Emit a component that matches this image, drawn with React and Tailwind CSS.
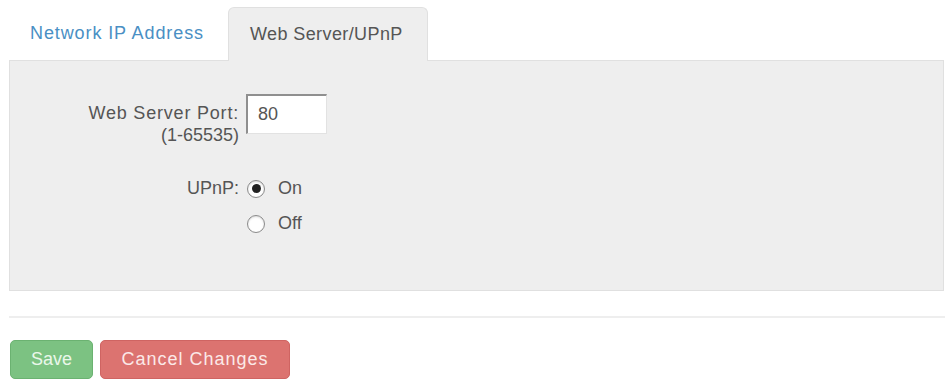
import React, { useState } from "react";

function Radio({ checked, label, onClick }) {
  return (
    <label className="flex items-center h-[35px] cursor-pointer" onClick={onClick}>
      <span className="w-[18px] h-[18px] rounded-full border border-[#8a8a8a] bg-white flex items-center justify-center shadow-[inset_0_1px_2px_rgba(0,0,0,0.15)]">
        {checked && <span className="w-[9px] h-[9px] rounded-full bg-[#222]" />}
      </span>
      <span className="ml-[13px] text-[#555]">{label}</span>
    </label>
  );
}

export default function App() {
  const [upnp, setUpnp] = useState("on");
  const [port, setPort] = useState("80");

  return (
    <div
      className="w-[945px] h-[381px] bg-white pl-[9px] pt-[7px] text-[18px] text-[#555]"
      style={{ fontFamily: '"Liberation Sans", Arial, sans-serif' }}
    >
      {/* Tabs */}
      <div className="flex h-[53px] items-stretch">
        <a className="flex items-center w-[219px] pl-[21px] text-[#4a8fc4] tracking-[0.9px] whitespace-nowrap">
          Network IP Address
        </a>
        <div className="flex items-center pl-[21px] w-[200px] bg-[#eeeeee] border border-b-0 border-[#e0e0e0] rounded-t-[6px] -mb-px relative z-10 tracking-[0.4px] whitespace-nowrap">
          Web Server/UPnP
        </div>
      </div>

      {/* Panel */}
      <div className="h-[231px] mr-[1px] bg-[#eeeeee] border border-[#e0e0e0] pt-[33px]">
        <div className="grid grid-cols-[229px_1fr] gap-x-[7px]">
          <div className="text-right leading-[22px] pt-[8px]">
            <div className="tracking-[0.8px]">Web Server Port:</div>
            <div>(1-65535)</div>
          </div>
          <div>
            <input
              value={port}
              onChange={(e) => setPort(e.target.value)}
              className="w-[81px] h-[40px] bg-white border border-[#e2e2e2] border-t-[#8f8f8f] border-l-[#8f8f8f] border-t-2 border-l-2 pl-[10px] text-[#555] outline-none"
            />
          </div>

          <div className="text-right mt-[25px] leading-[35px]">UPnP:</div>
          <div className="mt-[25px] pl-[1px]">
            <Radio checked={upnp === "on"} label="On" onClick={() => setUpnp("on")} />
            <Radio checked={upnp === "off"} label="Off" onClick={() => setUpnp("off")} />
          </div>
        </div>
      </div>

      {/* Divider */}
      <div className="mt-[25px] border-t-2 border-[#eeeeee]" />

      {/* Buttons */}
      <div className="flex gap-[7px] mt-[22px] pl-[1px]">
        <button className="w-[83px] h-[39px] rounded-[5px] bg-[#7cc282] text-[#eaf7ea] border border-[#6bb271]">
          Save
        </button>
        <button className="w-[190px] h-[39px] rounded-[5px] bg-[#dc7370] text-[#fbe9e8] border border-[#cf6462] tracking-[1px] whitespace-nowrap">
          Cancel Changes
        </button>
      </div>
    </div>
  );
}
